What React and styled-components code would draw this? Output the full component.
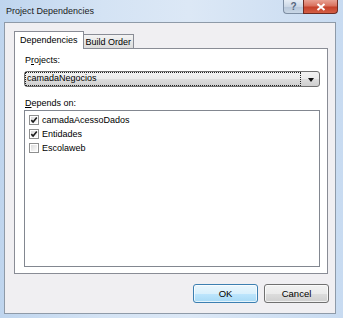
import React from "react";
import styled, { createGlobalStyle } from "styled-components";

const GlobalStyle = createGlobalStyle`
  html, body { margin: 0; padding: 0; background: #c6daf0; }
  * { box-sizing: border-box; }
`;

const projects = [
	{ name: "camadaAcessoDados", checked: true },
	{ name: "Entidades", checked: true },
	{ name: "Escolaweb", checked: false },
];

const Check = ({ checked }) => (
	<svg width="10" height="10" viewBox="0 0 10 10">
		<defs>
			<linearGradient id="cbg" x1="0" y1="0" x2="1" y2="1">
				<stop offset="0" stopColor="#dcdcdc" />
				<stop offset="1" stopColor="#fbfbfb" />
			</linearGradient>
		</defs>
		<rect x="0.5" y="0.5" width="9" height="9" fill="#fff" stroke="#8e8f8f" />
		<rect x="2" y="2" width="6" height="6" fill="url(#cbg)" />
		{checked && (
			<path d="M2.3 5.1 L4.1 7 L7.8 2.6" fill="none" stroke="#1c1c1c" strokeWidth="1.6" />
		)}
	</svg>
);

const Dialog = () => {
	return (
		<Window>
			<TitleBar>
				<Title>Project Dependencies</Title>
				<Caption>
					<HelpButton>?</HelpButton>
					<CloseButton>
						<svg width="10" height="8" viewBox="0 0 10 8">
							<path d="M1.5 1 L8.5 7 M8.5 1 L1.5 7" stroke="#fff" strokeWidth="2" />
						</svg>
					</CloseButton>
				</Caption>
			</TitleBar>

			<Client>
				<TabStrip>
					<Tab active>Dependencies</Tab>
					<Tab>Build Order</Tab>
				</TabStrip>

				<Panel>
					<Label>
						P<u>r</u>ojects:
					</Label>
					<Combo>
						<ComboText>camadaNegocios</ComboText>
						<Arrow />
					</Combo>

					<Label top="10px">
						<u>D</u>epends on:
					</Label>
					<ListBox>
						{projects.map((p) => (
							<Item key={p.name}>
								<Check checked={p.checked} />
								<span>{p.name}</span>
							</Item>
						))}
					</ListBox>
				</Panel>

				<ButtonRow>
					<Button primary>OK</Button>
					<Button>Cancel</Button>
				</ButtonRow>
			</Client>
		</Window>
	);
};

// Styled Components
const Window = styled.div`
	width: 343px;
	height: 318px;
	display: flex;
	flex-direction: column;
	padding: 0 7px 4px 4px;
	background: linear-gradient(90deg, #bfd5ee 0%, #d4e3f4 30%, #dce8f6 55%, #c8dbf1 100%);
	font-family: "Liberation Sans", Arial, sans-serif;
	font-size: 9px;
	color: #000;
`;

const TitleBar = styled.div`
	height: 22px;
	display: flex;
	justify-content: space-between;
	align-items: flex-start;
`;

const Title = styled.span`
	padding: 6px 0 0 2px;
	color: #1b1b1b;
`;

const Caption = styled.div`
	display: flex;
	margin-right: -2px;
`;

const HelpButton = styled.div`
	width: 20px;
	height: 14px;
	display: flex;
	align-items: center;
	justify-content: center;
	border: 1px solid #7d8ea3;
	border-top: none;
	border-right: none;
	border-radius: 0 0 0 4px;
	background: linear-gradient(#e6edf5 0%, #ccd8e6 50%, #b6c6d9 51%, #c9d7e6 100%);
	color: #55677e;
	font-size: 10px;
	font-weight: bold;
`;

const CloseButton = styled.div`
	width: 35px;
	height: 14px;
	display: flex;
	align-items: center;
	justify-content: center;
	border: 1px solid #6e2b22;
	border-top: none;
	border-radius: 0 0 4px 0;
	background: linear-gradient(#e8a193 0%, #d9725f 45%, #c5412b 55%, #d45f45 100%);
`;

const Client = styled.div`
	flex: 1;
	display: flex;
	flex-direction: column;
	border: 1px solid #8e9aa8;
	background: #f0eff2;
	padding: 8px 7px 10px 9px;
`;

const TabStrip = styled.div`
	display: flex;
	align-items: flex-end;
	margin-bottom: -1px;
	position: relative;
	z-index: 1;
`;

const Tab = styled.div`
	height: ${(p) => (p.active ? "18px" : "15px")};
	display: flex;
	align-items: center;
	padding: ${(p) => (p.active ? "0 5px 1px" : "0 2px")};
	border: 1px solid #898c95;
	border-bottom: ${(p) => (p.active ? "none" : "1px solid #898c95")};
	border-left: ${(p) => (p.active ? "1px solid #898c95" : "none")};
	background: ${(p) => (p.active ? "#fff" : "linear-gradient(#f3f3f3, #dcdcdc)")};
`;

const Panel = styled.div`
	flex: 1;
	display: flex;
	flex-direction: column;
	border: 1px solid #898c95;
	background: #fff;
	padding: 5px 7px 6px 9px;
`;

const Label = styled.div`
	line-height: 13px;
	margin-top: ${(p) => p.top || "0"};
	padding-left: 1px;
`;

const Combo = styled.div`
	height: 16px;
	margin-top: 4px;
	display: flex;
	align-items: center;
	padding: 0 5px 0 1px;
	border: 1px solid #707070;
	border-radius: 3px;
	background: linear-gradient(#f2f2f2 0%, #ebebeb 50%, #dddddd 51%, #cfcfcf 100%);
`;

const ComboText = styled.div`
	flex: 1;
	height: 12px;
	line-height: 11px;
	padding-left: 1px;
	margin-right: 8px;
	outline: 1px dotted #222;
`;

const Arrow = styled.div`
	width: 0;
	height: 0;
	border-left: 3.5px solid transparent;
	border-right: 3.5px solid transparent;
	border-top: 4px solid #111;
	margin-top: 1px;
`;

const ListBox = styled.div`
	flex: 1;
	border: 1px solid #828790;
	background: #fff;
	padding: 2px 4px;
`;

const Item = styled.div`
	height: 14px;
	display: flex;
	align-items: center;
	gap: 3px;
`;

const ButtonRow = styled.div`
	display: flex;
	justify-content: flex-end;
	gap: 6px;
	margin: 10px -1px 0 0;
`;

const Button = styled.div`
	width: 65px;
	height: 19px;
	display: flex;
	align-items: center;
	justify-content: center;
	border: 1px solid ${(p) => (p.primary ? "#3c7fb1" : "#707070")};
	border-radius: 3px;
	background: ${(p) =>
		p.primary
			? "linear-gradient(#eaf6fd 0%, #d9f0fc 50%, #bee6fd 51%, #a7d9f5 100%)"
			: "linear-gradient(#f2f2f2 0%, #ebebeb 50%, #dddddd 51%, #cfcfcf 100%)"};
	box-shadow: inset 0 0 0 1px rgba(255, 255, 255, 0.7);
	font-size: 9.5px;
`;

const App = () => (
	<>
		<GlobalStyle />
		<Dialog />
	</>
);

export default App;
